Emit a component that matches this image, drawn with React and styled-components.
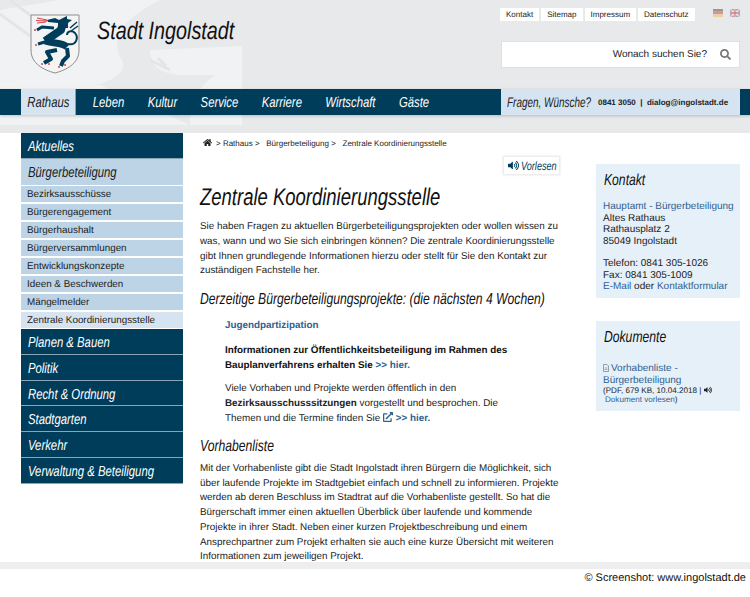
import React from 'react';
import styled, {createGlobalStyle} from 'styled-components';
import {FaHome, FaSearch, FaVolumeUp, FaExternalLinkAlt} from 'react-icons/fa';

const dark = '#003d5b';
const link = '#2f6291';

const Global = createGlobalStyle`
	html, body {
		margin: 0;
		padding: 0;
		background: white;
	}
	body {
		width: 750px;
		height: 597px;
		overflow: hidden;
		font-family: "Liberation Sans", Arial, sans-serif;
		font-size: 10px;
		color: #1a1a1a;
		text-rendering: geometricPrecision;
	}
	a {
		color: ${link};
		text-decoration: none;
	}
`;

// no condensed face is installed, so the italic headings get squeezed
const Squeeze = styled.span`
	display: inline-block;
	font-style: italic;
	font-weight: normal;
	white-space: nowrap;
	transform: scaleX(${p => p.$x || 0.78});
	transform-origin: left center;
`;

const Header = styled.header`
	position: relative;
	height: 133px;
	background: #e8e9eb;
	overflow: hidden;
`;

const Watermark = styled.svg`
	position: absolute;
	left: 0;
	top: 0;
`;

const Top = styled.div`
	position: relative;
	height: 89px;
	display: flex;
	justify-content: space-between;
`;

const Brand = styled.div`
	display: flex;
	align-items: flex-start;
	padding: 14px 0 0 30px;
`;

const SiteName = styled.div`
	font-size: 25px;
	line-height: 30px;
	color: #111;
	margin: 2px 0 0 17px;
`;

const Tools = styled.div`
	width: 239px;
	margin-right: 10px;
	padding-top: 8px;
`;

const ToolRow = styled.div`
	display: flex;
	align-items: flex-start;
`;

const MetaLink = styled.a`
	background: white;
	color: #222;
	font-size: 8px;
	line-height: 13px;
	padding: 0 6px;
	margin-right: 2px;
	&:first-child {
		margin-left: -1px;
	}
`;

const Flags = styled.div`
	margin-left: auto;
	display: flex;
	gap: 7px;
	padding-top: 1px;
`;

const Search = styled.div`
	margin-top: 20px;
	height: 27px;
	background: white;
	border: 1px solid #dfe0e2;
	box-sizing: border-box;
	display: flex;
	align-items: center;
	justify-content: flex-end;
	padding-right: 8px;
	font-size: 10px;
	color: #222;
	svg {
		margin-left: 13px;
		color: #777;
		font-size: 11px;
	}
`;

const Nav = styled.nav`
	position: relative;
	height: 26px;
	background: ${dark};
	padding-left: 21px;
	box-shadow: 0 1px 3px rgba(0, 0, 0, 0.2);
`;

const NavList = styled.div`
	display: flex;
	height: 26px;
	width: 640px;
	transform: scaleX(0.78);
	transform-origin: left center;
`;

const NavItem = styled.a`
	font-style: italic;
	font-size: 14.5px;
	line-height: 29px;
	color: ${p => (p.$active ? '#1a1a1a' : 'white')};
	background: ${p => (p.$active ? '#d5e4f0' : 'transparent')};
	padding: 0 ${p => (p.$active ? '8px' : '0')};
	margin-right: ${p => (p.$active ? '22px' : '30px')};
`;

const Hotline = styled.div`
	position: absolute;
	left: 501px;
	top: 0;
	width: 239px;
	height: 26px;
	background: #d5e4f0;
	display: flex;
	align-items: center;
	padding-left: 6px;
	box-sizing: border-box;
	font-size: 8px;
	font-weight: bold;
	color: #222;
	white-space: pre;
`;

const HotlineLabel = styled.div`
	width: 91px;
	flex: none;
	font-size: 14px;
`;

const Main = styled.main`
	height: 429px;
	overflow: hidden;
	display: flex;
	align-items: flex-start;
	padding-left: 21px;
`;

const Side = styled.aside`
	width: 162px;
	flex: none;
`;

const SideHead = styled.a`
	display: block;
	height: ${p => (p.$low ? '25.8px' : '26px')};
	margin-bottom: ${p => (p.$open ? '-1px' : '0')};
	font-size: 14.5px;
	line-height: 28px;
	padding-left: 7px;
	color: ${p => (p.$open ? '#1a1a1a' : 'white')};
	background: ${p => (p.$open ? '#bcd4e6' : dark)};
	border-bottom: ${p => (p.$open ? 'none' : '1px solid #8ba5b5')};
	box-sizing: border-box;
	overflow: hidden;
`;

const SideSub = styled.a`
	display: block;
	height: 16px;
	margin: 2px 0 ${p => (p.$active ? '1px' : '0')};
	font-size: 9.85px;
	line-height: 17px;
	padding-left: 6px;
	color: #222;
	background: ${p => (p.$active ? '#d5e4f0' : '#bcd4e6')};
`;

const Content = styled.section`
	width: 360px;
	flex: none;
	margin-left: 17px;
	position: relative;
`;

const Crumbs = styled.div`
	margin-top: 5px;
	font-size: 8px;
	line-height: 12px;
	color: #222;
	white-space: pre;
	svg {
		font-size: 9px;
		margin: 0 4px 0 3px;
		vertical-align: -1px;
	}
`;

const ReadAloud = styled.a`
	position: absolute;
	right: 0;
	top: 23px;
	width: 57px;
	height: 19px;
	box-sizing: border-box;
	border: 1px solid #eee;
	box-shadow: 0 0 2px rgba(0, 0, 0, 0.12);
	display: flex;
	align-items: center;
	padding-left: 4px;
	font-size: 12px;
	color: ${dark};
	svg {
		font-size: 11px;
		flex: none;
		margin-right: 2px;
	}
`;

const Title = styled.h1`
	margin: 34px 0 0;
	font-weight: normal;
	font-size: 24px;
	line-height: 28px;
	color: #111;
	white-space: nowrap;
`;

const Text = styled.p`
	margin: ${p => p.$gap}px 0 0;
	font-size: 9.85px;
	line-height: 14.75px;
	color: #222;
`;

const SubTitle = styled.h2`
	margin: ${p => p.$gap}px 0 0;
	font-weight: normal;
	font-size: 16px;
	line-height: 20px;
	color: #111;
	white-space: nowrap;
`;

const Indent = styled.div`
	padding: 0 40px 0 25px;
	font-size: 9.85px;
	line-height: 14.8px;
	svg {
		font-size: 10px;
		color: ${link};
		vertical-align: -1px;
	}
`;

const IndentPara = styled.p`
	margin: ${p => p.$gap}px 0 0;
	font-weight: ${p => (p.$bold ? 'bold' : 'normal')};
	color: ${p => (p.$bold ? '#111' : '#222')};
`;

const Right = styled.aside`
	width: 144px;
	margin-left: 36px;
	flex: none;
`;

const Box = styled.div`
	background: #e6f0f8;
	margin-top: ${p => p.$top}px;
	height: ${p => p.$height}px;
	padding: 8px 4px 0 7px;
	box-sizing: border-box;
	font-size: 10px;
	line-height: 11.5px;
	color: #222;
`;

const BoxTitle = styled.div`
	font-size: 16px;
	line-height: 18px;
	color: #111;
	margin: 0 0 ${p => p.$gap}px 1px;
`;

const Gap = styled.div`
	height: 11px;
`;

const DocMeta = styled.div`
	font-size: 8.1px;
	line-height: 8.8px;
	color: #222;
	svg {
		font-size: 8px;
		vertical-align: -1px;
	}
`;

const DocLine = styled.div`
	padding-left: 2px;
`;

const Footer = styled.footer`
	height: 7px;
	background: #eeeeee;
`;

const Credit = styled.div`
	text-align: right;
	padding: 2px 4px 0 0;
	font-size: 11px;
	line-height: 15px;
	color: #111;
`;

const Shield = () => (
	<svg width="50" height="60" viewBox="0 0 50 60">
		<path d="M1 1 H49 V36 C49 50 36 56 25 59 C14 56 1 50 1 36 Z" fill="#f4f4f4" stroke="#8d8d8d" strokeWidth="1" />
		<path d="M17 6 L25 4 L29 6 L37 2 L37 5 L42 6 L38 9 L38 14 L28 14 L28 9 L18 8 Z" fill={dark} />
		<g fill="none" stroke={dark} strokeLinejoin="round">
			<path d="M32 12 L31 16 L15 27" strokeWidth="8" />
			<path d="M24 14 L12 13 L7 16" strokeWidth="3" />
			<path d="M18 27 L8 30" strokeWidth="3" />
			<path d="M15 27 C25 30 32 28 37 33" strokeWidth="7" />
			<path d="M27 36 L17 38 L21 45 L14 49" strokeWidth="4" />
			<path d="M37 34 L38 42 L33 47 L31 52" strokeWidth="4" />
			<path d="M38 30 C46 32 49 24 45 19 C42 16 37 17 37 21" strokeWidth="2" />
			<path d="M40 14 L47 8 M41 17 L48 12" strokeWidth="1.5" />
		</g>
		<path d="M7 4 L17 6 M6 6.5 L17 7 M7 9 L16 8" stroke="#d3444f" strokeWidth="1.1" />
		<g fill="#d3444f">
			<circle cx="5" cy="16" r="1" />
			<circle cx="6" cy="31" r="1" />
			<circle cx="12" cy="50" r="1" />
			<circle cx="29" cy="53" r="1" />
			<circle cx="35" cy="51" r="1" />
			<circle cx="19" cy="50" r="1" />
		</g>
	</svg>
);

const DeFlag = () => (
	<svg width="10" height="8" viewBox="0 0 10 8" opacity="0.55">
		<rect width="10" height="2.7" fill="#555" />
		<rect y="2.7" width="10" height="2.7" fill="#c8504a" />
		<rect y="5.4" width="10" height="2.6" fill="#e9c45a" />
	</svg>
);

const UkFlag = () => (
	<svg width="10" height="8" viewBox="0 0 10 8" opacity="0.7">
		<rect width="10" height="8" fill="#5a6fa8" />
		<path d="M0 0 L10 8 M10 0 L0 8" stroke="white" strokeWidth="1.6" />
		<path d="M0 0 L10 8 M10 0 L0 8" stroke="#c8504a" strokeWidth="0.5" />
		<path d="M5 0 V8 M0 4 H10" stroke="white" strokeWidth="2.6" />
		<path d="M5 0 V8 M0 4 H10" stroke="#c8504a" strokeWidth="1.3" />
	</svg>
);

const DocIcon = () => (
	<svg width="6" height="8" viewBox="0 0 6 8" style={{marginRight: 2, verticalAlign: -1}}>
		<path d="M0.5 0.5 H4 L5.5 2 V7.5 H0.5 Z" fill="#e6f0f8" stroke="#7d8a96" strokeWidth="0.8" />
		<path d="M1.5 4 H4.5 M1.5 5.5 H4.5" stroke="#7d8a96" strokeWidth="0.6" />
	</svg>
);

const mainNav = ['Leben', 'Kultur', 'Service', 'Karriere', 'Wirtschaft', 'Gäste'];
const subNav = ['Bezirksausschüsse', 'Bürgerengagement', 'Bürgerhaushalt', 'Bürgerversammlungen', 'Entwicklungskonzepte', 'Ideen & Beschwerden', 'Mängelmelder'];
const lowerNav = ['Planen & Bauen', 'Politik', 'Recht & Ordnung', 'Stadtgarten', 'Verkehr', 'Verwaltung & Beteiligung'];

export default () => {
	return (
		<>
			<Global />
			<Header>
				<Watermark width="250" height="133" viewBox="0 0 250 133">
					<path d="M0 10 L60 0 L160 0 C120 20 110 40 122 60 C130 75 100 90 70 85 L0 80 Z" fill="#f1f2f3" />
					<path d="M150 50 L242 46 L242 125 L190 125 C190 100 200 85 215 75 C185 75 150 80 150 50 Z" fill="#f1f2f3" />
					<path d="M0 80 L100 85 L190 125 L0 125 Z" fill="#f1f2f3" />
					<path d="M0 14 L30 36 M10 0 L50 30 M150 60 L170 70 M158 58 L166 66" stroke="#e4e5e7" strokeWidth="3" fill="none" />
				</Watermark>
				<Top>
					<Brand>
						<Shield />
						<SiteName><Squeeze $x={0.79}>Stadt Ingolstadt</Squeeze></SiteName>
					</Brand>
					<Tools>
						<ToolRow>
							<MetaLink>Kontakt</MetaLink>
							<MetaLink>Sitemap</MetaLink>
							<MetaLink>Impressum</MetaLink>
							<MetaLink>Datenschutz</MetaLink>
							<Flags>
								<DeFlag />
								<UkFlag />
							</Flags>
						</ToolRow>
						<Search>
							Wonach suchen Sie?
							<FaSearch />
						</Search>
					</Tools>
				</Top>
				<Nav>
					<NavList>
						<NavItem $active>Rathaus</NavItem>
						{mainNav.map(n => (
							<NavItem key={n}>{n}</NavItem>
						))}
					</NavList>
					<Hotline>
						<HotlineLabel><Squeeze $x={0.71}>Fragen, Wünsche?</Squeeze></HotlineLabel>
						0841 3050  |  dialog@ingolstadt.de
					</Hotline>
				</Nav>
			</Header>
			<Main>
				<Side>
					<SideHead><Squeeze>Aktuelles</Squeeze></SideHead>
					<SideHead $open><Squeeze>Bürgerbeteiligung</Squeeze></SideHead>
					{subNav.map(n => (
						<SideSub key={n}>{n}</SideSub>
					))}
					<SideSub $active>Zentrale Koordinierungsstelle</SideSub>
					{lowerNav.map(n => (
						<SideHead $low key={n}><Squeeze>{n}</Squeeze></SideHead>
					))}
				</Side>
				<Content>
					<Crumbs>
						<FaHome />
						{'> Rathaus >   Bürgerbeteiligung >   Zentrale Koordinierungsstelle'}
					</Crumbs>
					<ReadAloud>
						<FaVolumeUp />
						<Squeeze $x={0.76}>Vorlesen</Squeeze>
					</ReadAloud>
					<Title><Squeeze $x={0.77}>Zentrale Koordinierungsstelle</Squeeze></Title>
					<Text $gap={8}>
						Sie haben Fragen zu aktuellen Bürgerbeteiligungsprojekten oder wollen wissen zu was, wann und wo Sie sich einbringen können? Die zentrale Koordinierungsstelle gibt Ihnen grundlegende Informationen hierzu oder stellt für Sie den Kontakt zur zuständigen Fachstelle her.
					</Text>
					<SubTitle $gap={11}><Squeeze $x={0.76}>Derzeitige Bürgerbeteiligungsprojekte: (die nächsten 4 Wochen)</Squeeze></SubTitle>
					<Indent>
						<IndentPara $gap={9} $bold>
							<a>Jugendpartizipation</a>
						</IndentPara>
						<IndentPara $gap={10} $bold>
							Informationen zur Öffentlichkeitsbeteiligung im Rahmen des Bauplanverfahrens erhalten Sie <a>&gt;&gt; hier.</a>
						</IndentPara>
						<IndentPara $gap={9}>
							Viele Vorhaben und Projekte werden öffentlich in den <b>Bezirksausschusssitzungen</b> vorgestellt und besprochen. Die Themen und die Termine finden Sie <FaExternalLinkAlt /> <a><b>&gt;&gt; hier.</b></a>
						</IndentPara>
					</Indent>
					<SubTitle $gap={10}><Squeeze $x={0.76}>Vorhabenliste</Squeeze></SubTitle>
					<Text $gap={5}>
						Mit der Vorhabenliste gibt die Stadt Ingolstadt ihren Bürgern die Möglichkeit, sich über laufende Projekte im Stadtgebiet einfach und schnell zu informieren. Projekte werden ab deren Beschluss im Stadtrat auf die Vorhabenliste gestellt. So hat die Bürgerschaft immer einen aktuellen Überblick über laufende und kommende Projekte in ihrer Stadt. Neben einer kurzen Projektbeschreibung und einem Ansprechpartner zum Projekt erhalten sie auch eine kurze Übersicht mit weiteren Informationen zum jeweiligen Projekt.
					</Text>
				</Content>
				<Right>
					<Box $top={31} $height={134}>
						<BoxTitle $gap={11}><Squeeze $x={0.76}>Kontakt</Squeeze></BoxTitle>
						<a>Hauptamt - Bürgerbeteiligung</a>
						<br />
						Altes Rathaus
						<br />
						Rathausplatz 2
						<br />
						85049 Ingolstadt
						<Gap />
						Telefon: 0841 305-1026
						<br />
						Fax: 0841 305-1009
						<br />
						<a>E-Mail</a> oder <a>Kontaktformular</a>
					</Box>
					<Box $top={23} $height={90}>
						<BoxTitle $gap={16}><Squeeze $x={0.76}>Dokumente</Squeeze></BoxTitle>
						<a>
							<DocIcon />
							Vorhabenliste -
							<br />
							Bürgerbeteiligung
						</a>
						<DocMeta>
							(PDF, 679 KB, 10.04.2018 | <FaVolumeUp />
							<DocLine><a>Dokument vorlesen</a>)</DocLine>
						</DocMeta>
					</Box>
				</Right>
			</Main>
			<Footer />
			<Credit>© Screenshot: www.ingolstadt.de</Credit>
		</>
	);
};
